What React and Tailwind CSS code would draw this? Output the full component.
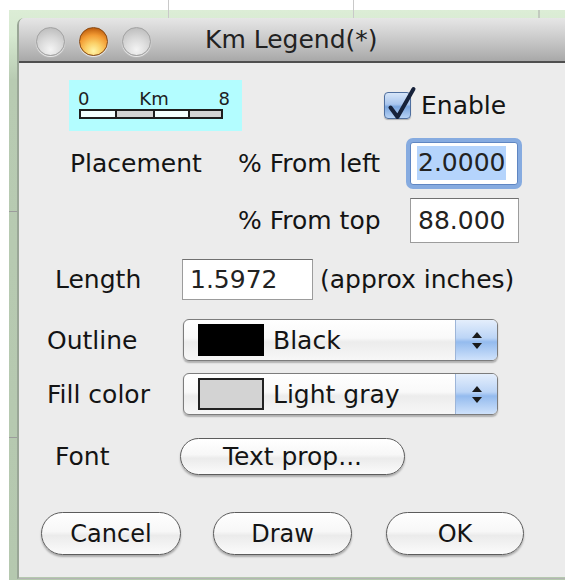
import React from "react";

function TrafficLight({ active }) {
  return (
    <div
      className={
        active
          ? "w-[29px] h-[29px] rounded-full border border-[#8a4a12] bg-[radial-gradient(circle_at_50%_85%,#fff4a8_0%,#fbd068_30%,#f29a32_60%,#c0600f_85%,#8a3c06_100%)] shadow-[0_1px_1px_rgba(255,255,255,0.8)]"
          : "w-[29px] h-[29px] rounded-full border border-[#a2a2a2] bg-[radial-gradient(circle_at_50%_80%,#f4f4f4_0%,#dadada_45%,#c2c2c2_80%,#a9a9a9_100%)] shadow-[0_1px_1px_rgba(255,255,255,0.8)]"
      }
    />
  );
}

function ScaleBar() {
  return (
    <div className="ml-[50px] w-[173px] h-[51px] bg-[#b3fdff] pt-[10px] pl-[9px] pr-[12px]">
      <div className="flex justify-between h-[18px] text-[18px] leading-[18px] text-[#1e1e1e]">
        <span>0</span>
        <span>Km</span>
        <span>8</span>
      </div>
      <div className="mt-[1px] ml-[1px] w-[144px] h-[10px] flex border-2 border-[#1e1e1e]">
        <div className="w-[34px] bg-[#f4ffff]" />
        <div className="w-[38px] bg-[#d3d3d3] border-l-2 border-[#1e1e1e]" />
        <div className="w-[35px] bg-[#f4ffff] border-l-2 border-[#1e1e1e]" />
        <div className="flex-1 bg-[#d3d3d3] border-l-2 border-[#1e1e1e]" />
      </div>
    </div>
  );
}

function Checkbox() {
  return (
    <div className="relative ml-[142px] w-[27px] h-[27px] rounded-[4px] border border-[#4f6f9f] bg-[linear-gradient(180deg,#d6e5f8_0%,#a9c6ee_45%,#7aa5de_55%,#b7d2f4_100%)] shadow-[0_1px_1px_rgba(0,0,0,0.25)]">
      <svg
        className="absolute left-0 top-0 overflow-visible"
        width="27"
        height="27"
        viewBox="0 0 27 27"
      >
        <path
          d="M5.5 14.5 L12.5 24 L28.5 -4"
          fill="none"
          stroke="#17223a"
          strokeWidth="4"
          strokeLinecap="round"
          strokeLinejoin="round"
        />
      </svg>
    </div>
  );
}

function TextField({ w, h, children }) {
  return (
    <div
      className="flex items-center bg-white border border-[#9c9c9c] border-t-[#707070] pl-[7px] text-[#222]"
      style={{ width: w, height: h }}
    >
      {children}
    </div>
  );
}

function ColorPopup({ swatch, label }) {
  return (
    <div className="flex items-stretch w-[315px] h-[42px] rounded-[6px] border border-[#7c7c7c] bg-[linear-gradient(180deg,#ffffff_0%,#f9f9f9_45%,#ececec_55%,#f7f7f7_100%)] shadow-[0_1.5px_1.5px_rgba(0,0,0,0.25)]">
      <div className="flex items-center flex-1 pl-[14px]">
        <div className={swatch} />
        <span className="ml-[9px]">{label}</span>
      </div>
      <div className="w-[42px] rounded-r-[5px] border-l border-[#9db5d8] bg-[linear-gradient(180deg,#e4eefc_0%,#bcd5f6_45%,#94bbee_55%,#cfe2fb_100%)] flex flex-col items-center justify-center gap-[5px]">
        <svg width="10" height="6" viewBox="0 0 10 6">
          <path d="M5 0 L10 6 L0 6 Z" fill="#1a1a1a" />
        </svg>
        <svg width="10" height="6" viewBox="0 0 10 6">
          <path d="M0 0 L10 0 L5 6 Z" fill="#1a1a1a" />
        </svg>
      </div>
    </div>
  );
}

function PillButton({ className, children }) {
  return (
    <div
      className={
        "flex items-center justify-center rounded-full border-[1.5px] border-[#5c5c5c] bg-[linear-gradient(180deg,#ffffff_0%,#f7f7f7_45%,#ebebeb_55%,#fbfbfb_100%)] shadow-[0_2px_2px_rgba(0,0,0,0.28)] " +
        className
      }
    >
      {children}
    </div>
  );
}

function Window() {
  return (
    <div className="w-[548px] h-[561px] rounded-tl-[7px] border-l-2 border-b border-[#9aa697] border-b-[#b4b4b4] overflow-hidden">
      {/* title bar */}
      <div className="flex items-center h-[45px] pl-[17px] border-b-2 border-[#4f4f4f] bg-[linear-gradient(180deg,#e6e6e6_0%,#d2d2d2_35%,#b9b9b9_75%,#a8a8a8_100%)]">
        <div className="flex gap-[14px] mt-[3px]">
          <TrafficLight />
          <TrafficLight active />
          <TrafficLight />
        </div>
        <span className="ml-[54px] text-[25px] text-[#222]">Km Legend(*)</span>
      </div>

      {/* dialog body */}
      <div className="h-[514px] bg-[#ececec] pt-[17px] text-[25px] leading-none text-[#141414]">
        <div className="flex items-center h-[51px]">
          <ScaleBar />
          <Checkbox />
          <span className="ml-[10px]">Enable</span>
        </div>

        <div className="flex items-center h-[54px] mt-[5px]">
          <span className="ml-[51px] w-[168px]">Placement</span>
          <span className="w-[172px]">% From left</span>
          <div className="w-[108px] h-[43px] rounded-[3px] bg-white border border-[#5f86c2] shadow-[0_0_0_4px_#86abe0] flex items-center pl-[6px] text-[#222]">
            <span className="bg-[#b5d4fc] leading-[34px] px-[1px]">2.0000</span>
          </div>
        </div>

        <div className="flex items-center h-[46px] mt-[7px]">
          <span className="ml-[219px] w-[172px]">% From top</span>
          <TextField w={109} h={45}>
            88.000
          </TextField>
        </div>

        <div className="flex items-center h-[41px] mt-[16px]">
          <span className="ml-[36px] w-[127px]">Length</span>
          <TextField w={131} h={41}>
            1.5972
          </TextField>
          <span className="ml-[7px]">(approx inches)</span>
        </div>

        <div className="flex items-center h-[42px] mt-[19px]">
          <span className="ml-[28px] w-[136px]">Outline</span>
          <ColorPopup swatch="w-[66px] h-[32px] bg-black" label="Black" />
        </div>

        <div className="flex items-center h-[42px] mt-[12px]">
          <span className="ml-[28px] w-[136px]">Fill color</span>
          <ColorPopup
            swatch="w-[66px] h-[32px] bg-[#d3d3d3] border-2 border-[#222]"
            label="Light gray"
          />
        </div>

        <div className="flex items-center h-[37px] mt-[23px]">
          <span className="ml-[36px] w-[125px]">Font</span>
          <PillButton className="w-[225px] h-[37px]">Text prop...</PillButton>
        </div>

        <div className="flex items-center h-[43px] mt-[37px] text-[24px]">
          <PillButton className="ml-[22px] w-[140px] h-[43px]">Cancel</PillButton>
          <PillButton className="ml-[32px] w-[139px] h-[43px]">Draw</PillButton>
          <PillButton className="ml-[34px] w-[138px] h-[43px]">OK</PillButton>
        </div>
      </div>
    </div>
  );
}

export default function App() {
  return (
    <div className="relative w-[565px] h-[580px] overflow-hidden bg-white pt-[10px] pl-[9px] font-['DejaVu_Sans',sans-serif]">
      {/* spreadsheet grid lines peeking out behind the dialog */}
      <div className="absolute left-[168px] top-0 h-[18px] w-px bg-[#c9c9c9]" />
      <div className="absolute left-[353px] top-0 h-[18px] w-px bg-[#c9c9c9]" />
      <div className="absolute left-[538px] top-[10px] h-[8px] w-[2px] bg-[#c2cbbf]" />
      <div className="absolute left-[9px] top-[211px] h-px w-[8px] bg-[#9c9c9c]" />
      <div className="absolute left-[9px] top-[437px] h-px w-[8px] bg-[#9c9c9c]" />
      <div className="h-[570px] pt-[8px] pl-[8px] bg-[linear-gradient(180deg,#dcedd6_0px,#d6e9d0_25px,#b8cbb2_70px,#b5c8af_100%)]">
        <Window />
      </div>
    </div>
  );
}
